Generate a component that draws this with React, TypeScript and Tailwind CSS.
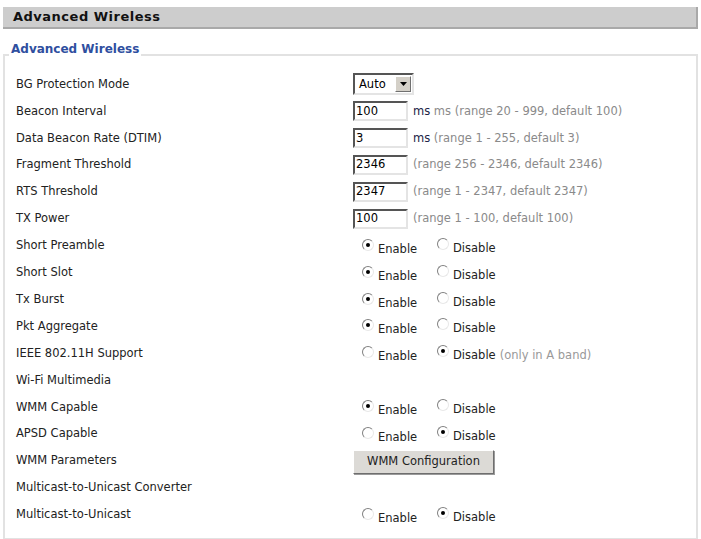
import React from 'react';

const font = { fontFamily: '"DejaVu Sans", Verdana, sans-serif' };

function Radio({ checked, label, note }: { checked?: boolean; label: string; note?: string }) {
  return (
    <span className="inline-flex items-start">
      <span className="relative mt-[1px] inline-block h-[12px] w-[12px] rounded-full border border-t-[#808080] border-l-[#808080] border-b-[#e8e8e8] border-r-[#e8e8e8] bg-white">
        {checked && <span className="absolute left-[3px] top-[3px] h-[4px] w-[4px] rounded-full bg-black" />}
      </span>
      <span className="ml-[4px] mt-[5px] text-[11.5px] leading-[13px] text-[#222]">{label}</span>
      {note && <span className="ml-[4px] mt-[5px] text-[11.5px] leading-[13px] text-[#999]">{note}</span>}
    </span>
  );
}

function Toggle({ on, note }: { on: boolean; note?: string }) {
  return (
    <div className="flex items-center pl-[9px]">
      <div className="w-[75px]">
        <Radio checked={on} label="Enable" />
      </div>
      <Radio checked={!on} label="Disable" note={note} />
    </div>
  );
}

function TextInput({ value, hint, unit }: { value: string; hint: string; unit?: string }) {
  return (
    <div className="flex items-center">
      <div className="flex h-[20px] w-[55px] items-center border-2 border-t-[#555] border-l-[#555] border-b-[#e4e4e4] border-r-[#e4e4e4] bg-white pl-[1px] text-[11.5px] text-black">
        {value}
      </div>
      <span className="ml-[5px] text-[11.5px]">
        {unit && <span className="text-[#222246]">{unit} </span>}
        <span className="text-[#8a8a8a]">{hint}</span>
      </span>
    </div>
  );
}

const rows: { label: string; control?: React.ReactNode }[] = [
  {
    label: 'BG Protection Mode',
    control: (
      <div className="flex h-[22px] w-[61px] items-center justify-between border-2 border-t-[#555] border-l-[#555] border-b-[#e4e4e4] border-r-[#e4e4e4] bg-white pl-[4px] pr-[1px] text-[11.5px] text-black">
        <span>Auto</span>
        <span className="flex h-[16px] w-[16px] items-center justify-center border border-t-white border-l-white border-b-[#707070] border-r-[#707070] bg-[#d4d0c8]">
          <svg width="7" height="4" viewBox="0 0 7 4"><path d="M0 0h7L3.5 4z" fill="#000" /></svg>
        </span>
      </div>
    ),
  },
  { label: 'Beacon Interval', control: <TextInput value="100" unit="ms" hint="ms (range 20 - 999, default 100)" /> },
  { label: 'Data Beacon Rate (DTIM)', control: <TextInput value="3" unit="ms" hint="(range 1 - 255, default 3)" /> },
  { label: 'Fragment Threshold', control: <TextInput value="2346" hint="(range 256 - 2346, default 2346)" /> },
  { label: 'RTS Threshold', control: <TextInput value="2347" hint="(range 1 - 2347, default 2347)" /> },
  { label: 'TX Power', control: <TextInput value="100" hint="(range 1 - 100, default 100)" /> },
  { label: 'Short Preamble', control: <Toggle on /> },
  { label: 'Short Slot', control: <Toggle on /> },
  { label: 'Tx Burst', control: <Toggle on /> },
  { label: 'Pkt Aggregate', control: <Toggle on /> },
  { label: 'IEEE 802.11H Support', control: <Toggle on={false} note="(only in A band)" /> },
  { label: 'Wi-Fi Multimedia' },
  { label: 'WMM Capable', control: <Toggle on /> },
  { label: 'APSD Capable', control: <Toggle on={false} /> },
  {
    label: 'WMM Parameters',
    control: (
      <button className="h-[24px] w-[141px] border border-t-white border-l-white border-b-[#6e6e6e] border-r-[#6e6e6e] bg-[#dcdad6] text-[11.5px] text-[#222] shadow-[1px_1px_0_#9a9a9a]">
        WMM Configuration
      </button>
    ),
  },
  { label: 'Multicast-to-Unicast Converter' },
  { label: 'Multicast-to-Unicast', control: <Toggle on={false} /> },
];

export default function App() {
  return (
    <div className="min-h-screen bg-white px-[3px] pt-[7px]" style={font}>
      <div className="flex h-[22px] items-center border-b-2 border-r-2 border-b-[#a9a9a9] border-r-[#a9a9a9] bg-[#cdcdcd] pl-[10px] text-[13px] font-bold tracking-[0.5px] text-[#111]">
        Advanced Wireless
      </div>
      <fieldset className="mt-[13px] border-2 border-[#e2e2e2] pb-[10px] pl-[11px] pr-0">
        <legend className="ml-[-7px] px-[2px] pb-[12px] text-[12px] font-bold leading-[14px] text-[#2f4f9f]">Advanced Wireless</legend>
        <div className="pt-[3px]">
          {rows.map((r) => (
            <div key={r.label} className="flex h-[26.9px] items-center">
              <div className="w-[337px] text-[11.5px] text-[#222]">{r.label}</div>
              <div>{r.control}</div>
            </div>
          ))}
        </div>
      </fieldset>
    </div>
  );
}
